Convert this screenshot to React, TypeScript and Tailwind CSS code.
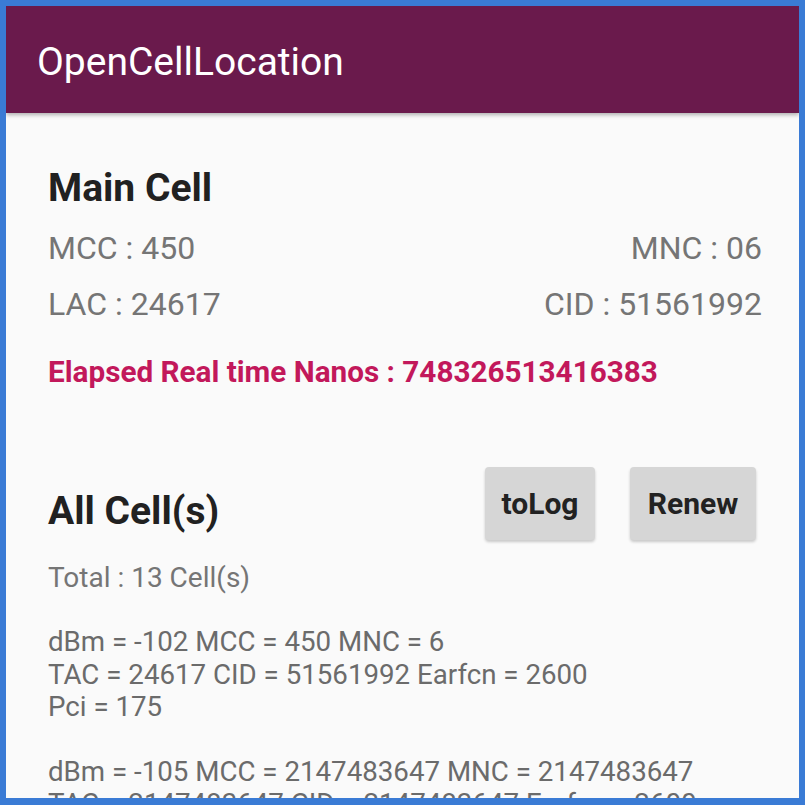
export default function App() {
  const cells = [
    ['dBm = -102 MCC = 450 MNC = 6', 'TAC = 24617 CID = 51561992 Earfcn = 2600', 'Pci = 175'],
    ['dBm = -105 MCC = 2147483647 MNC = 2147483647', 'TAC = 2147483647 CID = 2147483647 Earfcn = 2600', 'Pci = 175'],
  ];

  return (
    <div className="h-[805px] w-[805px] bg-[#3a7bd5] pt-[6px] pl-[6px] pr-[6px] pb-[7px] font-['Roboto',sans-serif]">
      <div className="flex h-full flex-col overflow-hidden bg-[#fafafa]">
        {/* app bar */}
        <div className="flex h-[107px] shrink-0 items-center bg-[#6a1a4c] pl-[31px] pt-[6px] shadow-[0_2px_4px_rgba(0,0,0,0.3)]">
          <span className="text-[39px] leading-none text-white">OpenCellLocation</span>
        </div>

        <div className="flex flex-col pl-[42px] pr-[37px]">
          {/* main cell */}
          <h2 className="mt-[53px] text-[39px] font-bold leading-[44px] text-[#212121]">Main Cell</h2>
          <div className="mt-[19px] flex justify-between text-[32px] leading-[38px] text-[#757575]">
            <span>MCC : 450</span>
            <span>MNC : 06</span>
          </div>
          <div className="mt-[18px] flex justify-between text-[32px] leading-[38px] text-[#757575]">
            <span>LAC : 24617</span>
            <span>CID : 51561992</span>
          </div>
          <p className="mt-[32px] text-[29.7px] font-bold leading-[34px] text-[#c2185b]">
            Elapsed Real time Nanos : 748326513416383
          </p>

          {/* all cells */}
          <div className="mt-[78px] flex items-center pr-[6px]">
            <h2 className="flex-1 pt-[14px] text-[39px] font-bold leading-[44px] text-[#212121]">All Cell(s)</h2>
            <button className="h-[73px] w-[110px] rounded-[4px] bg-[#d6d6d6] text-[30px] font-bold text-[#222] shadow-[0_2px_3px_rgba(0,0,0,0.2)]">
              toLog
            </button>
            <button className="ml-[35px] h-[73px] w-[126px] rounded-[4px] bg-[#d6d6d6] text-[30px] font-bold text-[#222] shadow-[0_2px_3px_rgba(0,0,0,0.2)]">
              Renew
            </button>
          </div>
          <p className="mt-[21px] text-[28px] leading-[34px] text-[#757575]">Total : 13 Cell(s)</p>

          <div className="mt-[31px] flex flex-col gap-[32px] text-[27.7px] leading-[32.5px] text-[#6b6b6b]">
            {cells.map((c, i) => (
              <div key={i}>
                {c.map((line) => (
                  <div key={line}>{line}</div>
                ))}
              </div>
            ))}
          </div>
        </div>
      </div>
    </div>
  );
}
